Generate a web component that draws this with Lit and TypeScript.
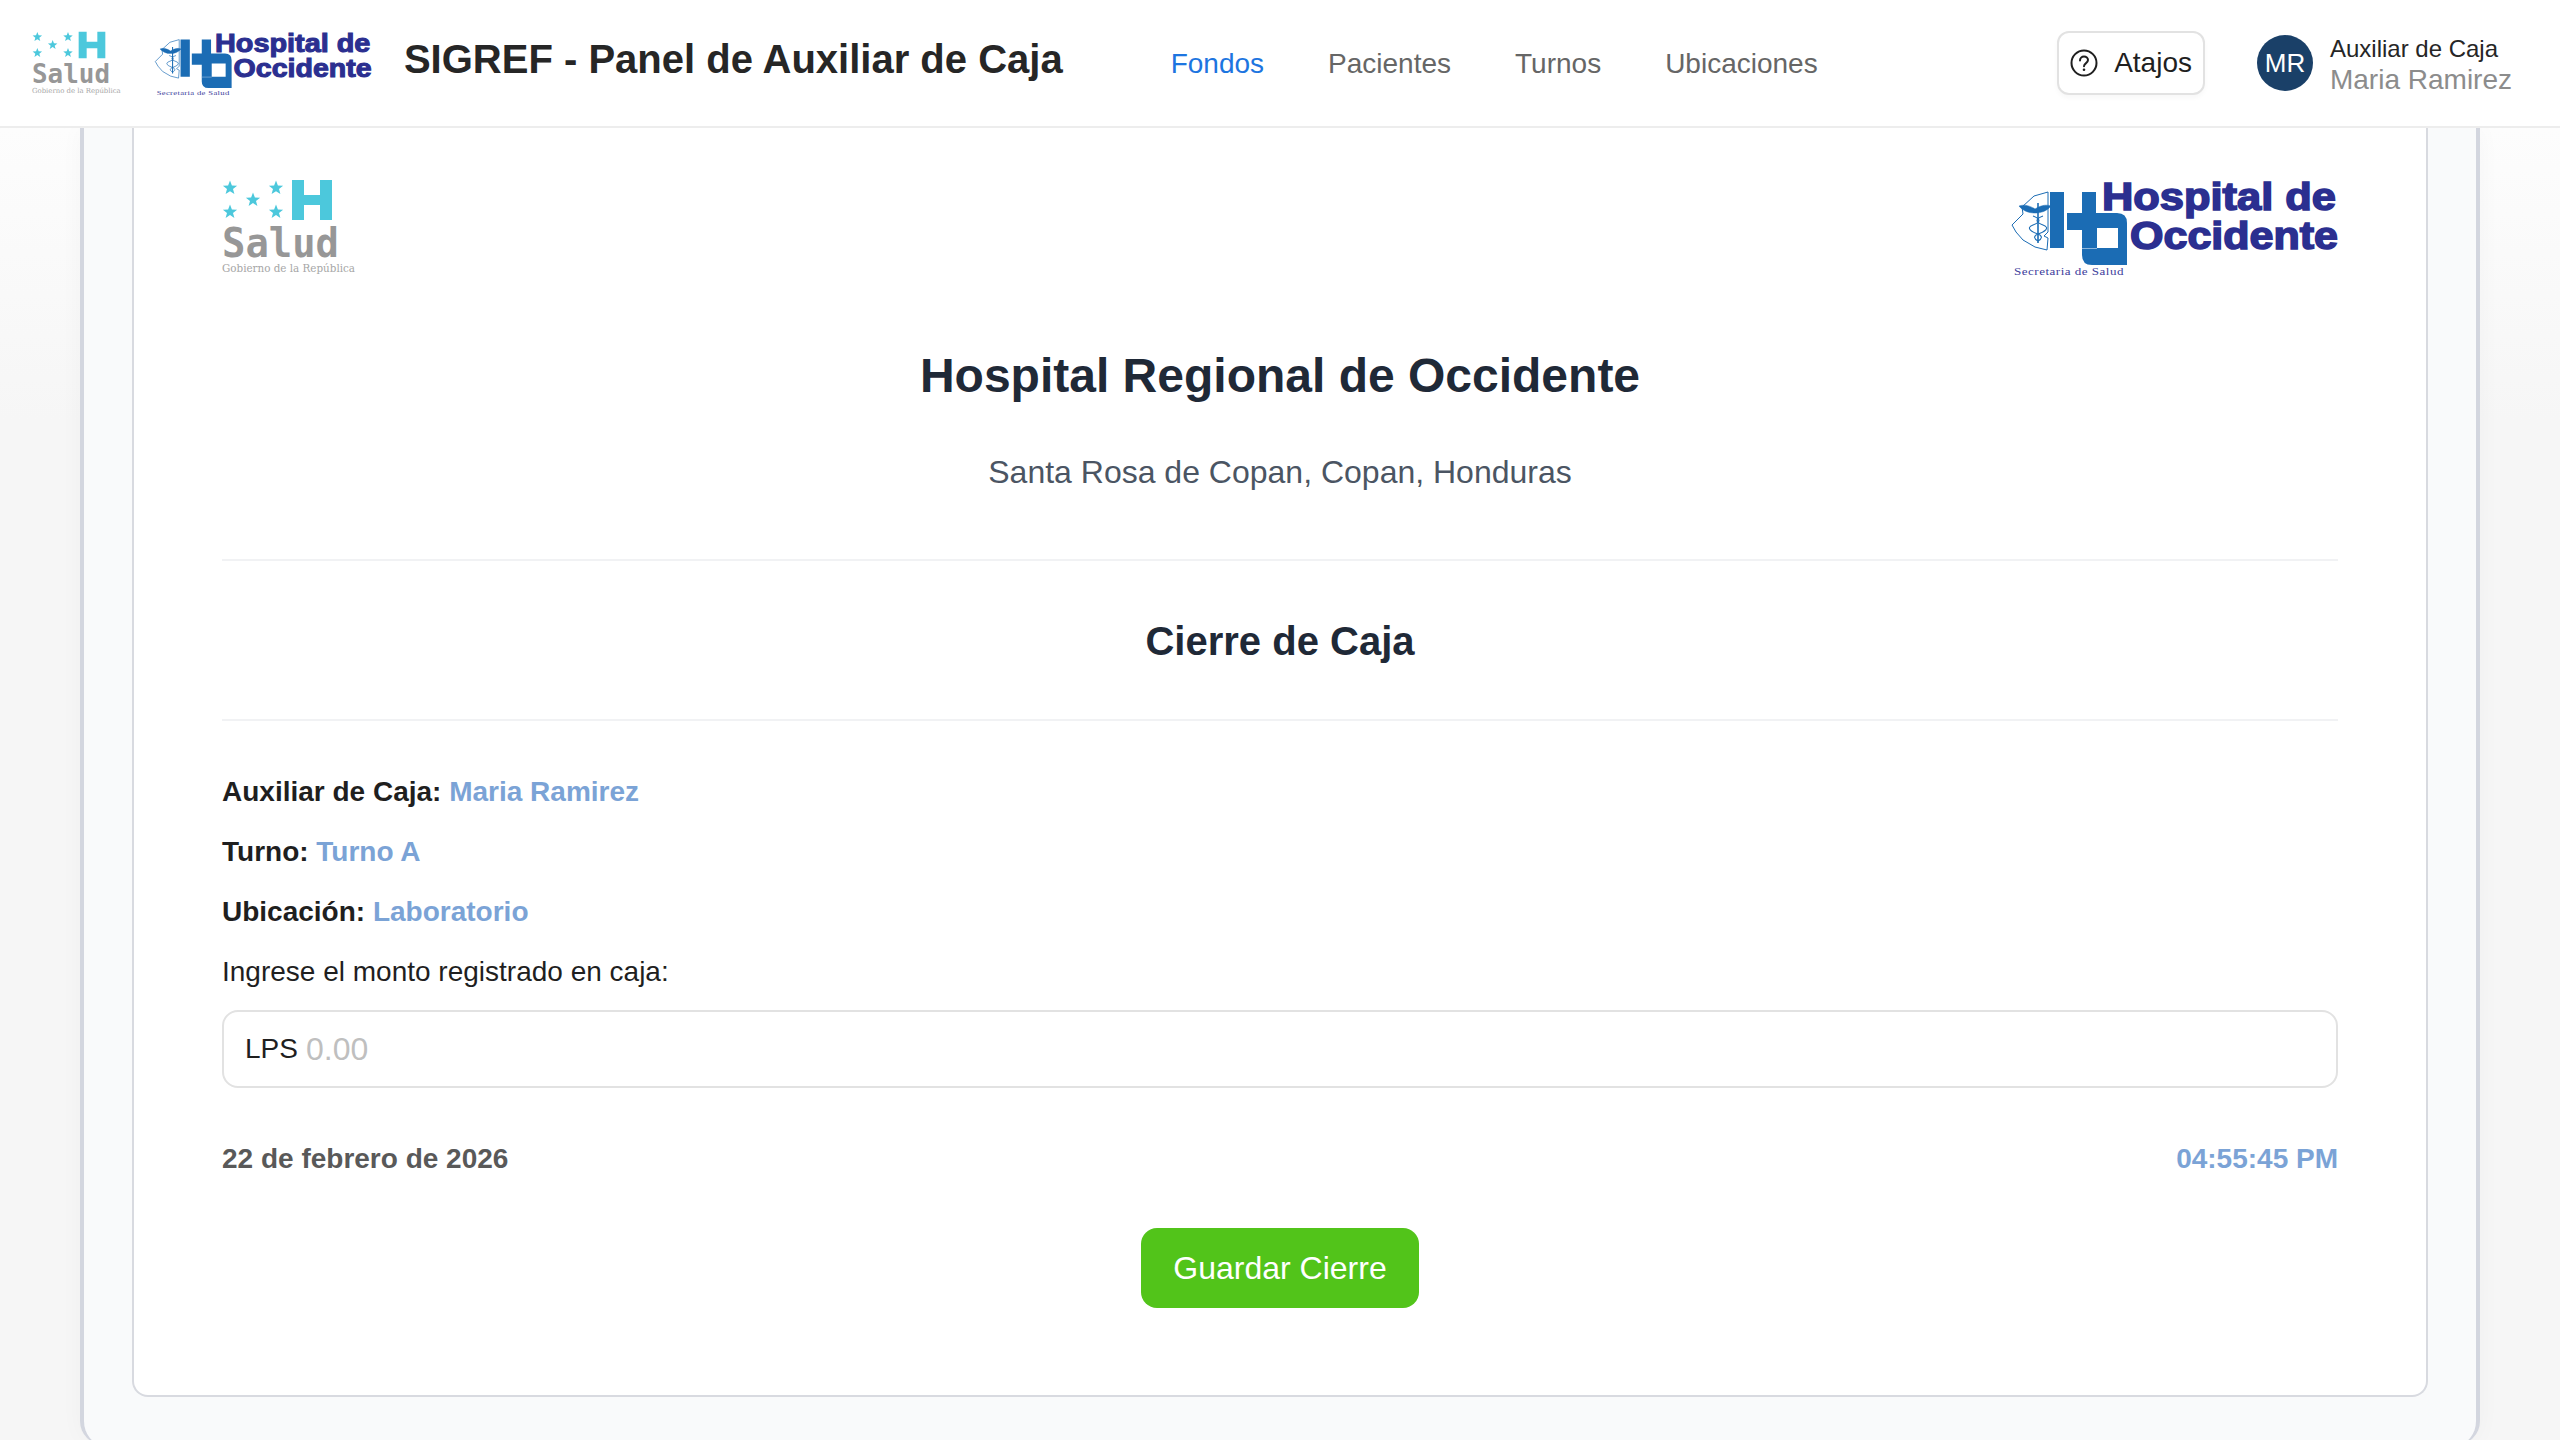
import { LitElement, html, css, svg } from "lit";
import { customElement, property } from "lit/decorators.js";

const star = (cx: number, cy: number, r = 7.5) => {
  const pts: string[] = [];
  for (let i = 0; i < 10; i++) {
    const rad = i % 2 === 0 ? r : r * 0.42;
    const a = -Math.PI / 2 + (i * Math.PI) / 5;
    pts.push(`${(cx + rad * Math.cos(a)).toFixed(1)},${(cy + rad * Math.sin(a)).toFixed(1)}`);
  }
  return svg`<polygon points=${pts.join(" ")} fill="#4cc8dc"></polygon>`;
};

@customElement("salud-logo")
class SaludLogo extends LitElement {
  @property({ type: Number }) h = 102;
  static styles = css`
    :host { display: block; flex: none; }
    svg { display: block; overflow: visible; }
    .word { font-family: "DejaVu Sans Mono", monospace; font-weight: 700; font-size: 40px; fill: #979797; }
    .sub { font-family: "DejaVu Serif", serif; font-size: 10.4px; fill: #a6a6a6; }
  `;
  render() {
    return html`<svg width=${(this.h * 140) / 102} height=${this.h} viewBox="0 0 140 102">
      ${star(8, 12)}${star(31, 24)}${star(54, 12)}${star(8, 36)}${star(54, 36)}
      <path d="M70 4h12v15h16V4h12v40H98V29H82v15H70z" fill="#4cc8dc"></path>
      <text class="word" x="0" y="81" textLength="117" lengthAdjust="spacingAndGlyphs">Salud</text>
      <text class="sub" x="0" y="96" textLength="133" lengthAdjust="spacingAndGlyphs">Gobierno de la República</text>
    </svg>`;
  }
}

@customElement("hospital-logo")
class HospitalLogo extends LitElement {
  @property({ type: Number }) h = 104;
  static styles = css`
    :host { display: block; flex: none; }
    svg { display: block; overflow: visible; }
    .t { font-family: "Liberation Sans", sans-serif; font-weight: 700; font-size: 39px; fill: #2b2f90; stroke: #2b2f90; stroke-width: 1.6px; }
    .sec { font-family: "Liberation Serif", serif; font-size: 10.5px; fill: #3d409c; letter-spacing: .4px; }
  `;
  render() {
    return html`<svg width=${(this.h * 328) / 104} height=${this.h} viewBox="0 0 328 104">
      <path d="M38 16 L24 20 L12 31 L13 38 L2 49 L6 56 L13 64 L25 71 L37 74 L38 62 L34 60 L38 56Z" fill="#fff" stroke="#1b6cb4" stroke-width="1"></path>
      <g stroke="#1b6cb4" fill="none">
        <path d="M28 27V67" stroke-width="1.6"></path>
        <path d="M12 30c6-2 11 0 16 3 5-3 10-5 16-3-4 5-10 7-16 7s-12-2-16-7Z" fill="#1b6cb4" stroke-width=".5" transform="translate(-3 0)"></path>
        <path d="M23 40c8 3 8 6 0 9s-1 7 5 9c5 2 4 5 0 7M33 40c-8 3-8 6 0 9s1 7-5 9c-5 2-4 5 0 7" stroke-width="1.1"></path>
      </g>
      <path d="M40 16h14v56H40zM72 16h14v21h21q10 0 10 10v42H82q-10 0-10-10V54H57V37h15zM87 52v20h21V52z" fill="#1b6cb4" fill-rule="evenodd"></path>
      <path d="M72 72.5h15" stroke="#a9c8e6" stroke-width=".8"></path>
      <text class="t" x="92" y="34" textLength="234" lengthAdjust="spacingAndGlyphs">Hospital de</text>
      <text class="t" x="120" y="72.5" textLength="208" lengthAdjust="spacingAndGlyphs">Occidente</text>
      <text class="sec" x="4" y="99" textLength="110" lengthAdjust="spacingAndGlyphs">Secretaria de Salud</text>
    </svg>`;
  }
}

@customElement("app-root")
export class AppRoot extends LitElement {
  static styles = css`
    :host {
      display: flex; flex-direction: column; height: 1440px; overflow: hidden;
      font-family: "Liberation Sans", Arial, sans-serif; color: #1f1f1f;
      background: linear-gradient(#fdfdfd 128px, #f6f6f6 420px);
    }
    .header {
      flex: none; height: 128px; box-sizing: border-box; background: #fff;
      border-bottom: 2px solid #ededed; display: flex; align-items: center; padding: 0 48px 0 32px;
    }
    .logos { display: flex; align-items: center; gap: 29px; }
    .app-title { margin: 0 0 9px 32px; font-size: 40px; line-height: 48px; font-weight: 700; color: #262626; white-space: nowrap; }
    .nav { display: flex; gap: 64px; margin-left: 108px; padding-top: 2px; font-size: 28px; color: #666; }
    .nav .on { color: #1d75e0; }
    .right { margin-left: auto; display: flex; align-items: center; gap: 52px; }
    .atajos {
      display: flex; align-items: center; gap: 16px; height: 64px; box-sizing: border-box; padding: 0 11px;
      background: #fff; border: 2px solid #e2e2e2; border-radius: 12px; box-shadow: 0 3px 5px rgba(0,0,0,.03);
      font: 28px "Liberation Sans", sans-serif; color: #1f1f1f;
    }
    .atajos svg { display: block; }
    .user { display: flex; align-items: center; gap: 17px; }
    .avatar {
      width: 56px; height: 56px; border-radius: 50%; background: #1a4068; color: #fff;
      display: flex; align-items: center; justify-content: center; font-size: 26px;
    }
    .user-text { display: flex; flex-direction: column; padding-top: 4px; }
    .role { font-size: 24px; line-height: 30px; color: #262626; }
    .name { font-size: 28px; line-height: 32px; color: #8c8c8c; }

    .main { flex: 1; min-height: 0; overflow: hidden; display: flex; justify-content: center; }
    .outer {
      width: 2400px; height: 1317px; flex: none; box-sizing: border-box; padding: 0 48px 48px;
      background: #f9fafb; border-left: 4px solid #d3d6df; border-right: 4px solid #d3d6df;
      border-radius: 0 0 24px 24px; box-shadow: 0 0 24px rgba(0,0,0,.03);
    }
    .card {
      height: 1269px; box-sizing: border-box; background: #fff; padding: 48px 88px 0;
      border: 2px solid #d8dae0; border-top: none; border-radius: 0 0 16px 16px;
    }
    .logo-row { display: flex; justify-content: space-between; height: 104px; }
    h1 { margin: 66px 0 0; text-align: center; font-size: 48px; line-height: 60px; font-weight: 700; color: #1f2937; }
    .place { margin: 46px 0 0; text-align: center; font-size: 32px; line-height: 40px; color: #4b5563; }
    .rule { height: 2px; background: #f1f2f4; margin-top: 67px; }
    h2 { margin: 56px 0 0; text-align: center; font-size: 40px; line-height: 48px; font-weight: 700; color: #1f2937; }
    .rule.two { margin-top: 54px; }
    .rows { margin-top: 51px; display: flex; flex-direction: column; gap: 20px; font-size: 28px; line-height: 40px; }
    .rows b { font-weight: 700; }
    .hl { color: #7ba3d6; font-weight: 700; }
    .input {
      margin-top: 18px; height: 78px; box-sizing: border-box; border: 2px solid #e2e2e2; border-radius: 16px;
      display: flex; align-items: center; gap: 8px; padding: 0 21px; font-size: 28px; color: #1f1f1f;
    }
    .ph { font-size: 32px; color: #bfbfbf; }
    .meta { display: flex; justify-content: space-between; margin-top: 51px; font-size: 28px; line-height: 40px; font-weight: 700; }
    .date { color: #595959; }
    .time { color: #7ba3d6; }
    .actions { display: flex; justify-content: center; margin-top: 49px; }
    .save {
      width: 278px; height: 80px; border: none; border-radius: 16px; background: #52c41a; color: #fff;
      font: 32px "Liberation Sans", sans-serif;
    }
  `;

  render() {
    return html`
      <header class="header">
        <div class="logos"><salud-logo .h=${68}></salud-logo><hospital-logo .h=${69}></hospital-logo></div>
        <div class="app-title">SIGREF - Panel de Auxiliar de Caja</div>
        <nav class="nav"><span class="on">Fondos</span><span>Pacientes</span><span>Turnos</span><span>Ubicaciones</span></nav>
        <div class="right">
          <button class="atajos">
            <svg width="28" height="28" viewBox="0 0 28 28" fill="none" stroke="#1f1f1f" stroke-width="2">
              <circle cx="14" cy="14" r="12.5"></circle>
              <path d="M10 11.5c0-2.4 1.8-4 4-4s4 1.5 4 3.6c0 3-4 3-4 6.2" stroke-linecap="round"></path>
              <circle cx="14" cy="20.8" r="1.3" fill="#1f1f1f" stroke="none"></circle>
            </svg>
            Atajos
          </button>
          <div class="user">
            <div class="avatar">MR</div>
            <div class="user-text"><span class="role">Auxiliar de Caja</span><span class="name">Maria Ramirez</span></div>
          </div>
        </div>
      </header>
      <main class="main">
        <section class="outer">
          <div class="card">
            <div class="logo-row"><salud-logo .h=${102}></salud-logo><hospital-logo .h=${104}></hospital-logo></div>
            <h1>Hospital Regional de Occidente</h1>
            <p class="place">Santa Rosa de Copan, Copan, Honduras</p>
            <div class="rule"></div>
            <h2>Cierre de Caja</h2>
            <div class="rule two"></div>
            <div class="rows">
              <div><b>Auxiliar de Caja:</b> <span class="hl">Maria Ramirez</span></div>
              <div><b>Turno:</b> <span class="hl">Turno A</span></div>
              <div><b>Ubicación:</b> <span class="hl">Laboratorio</span></div>
              <div>Ingrese el monto registrado en caja:</div>
            </div>
            <div class="input"><span>LPS</span><span class="ph">0.00</span></div>
            <div class="meta"><span class="date">22 de febrero de 2026</span><span class="time">04:55:45 PM</span></div>
            <div class="actions"><button class="save">Guardar Cierre</button></div>
          </div>
        </section>
      </main>
    `;
  }
}
